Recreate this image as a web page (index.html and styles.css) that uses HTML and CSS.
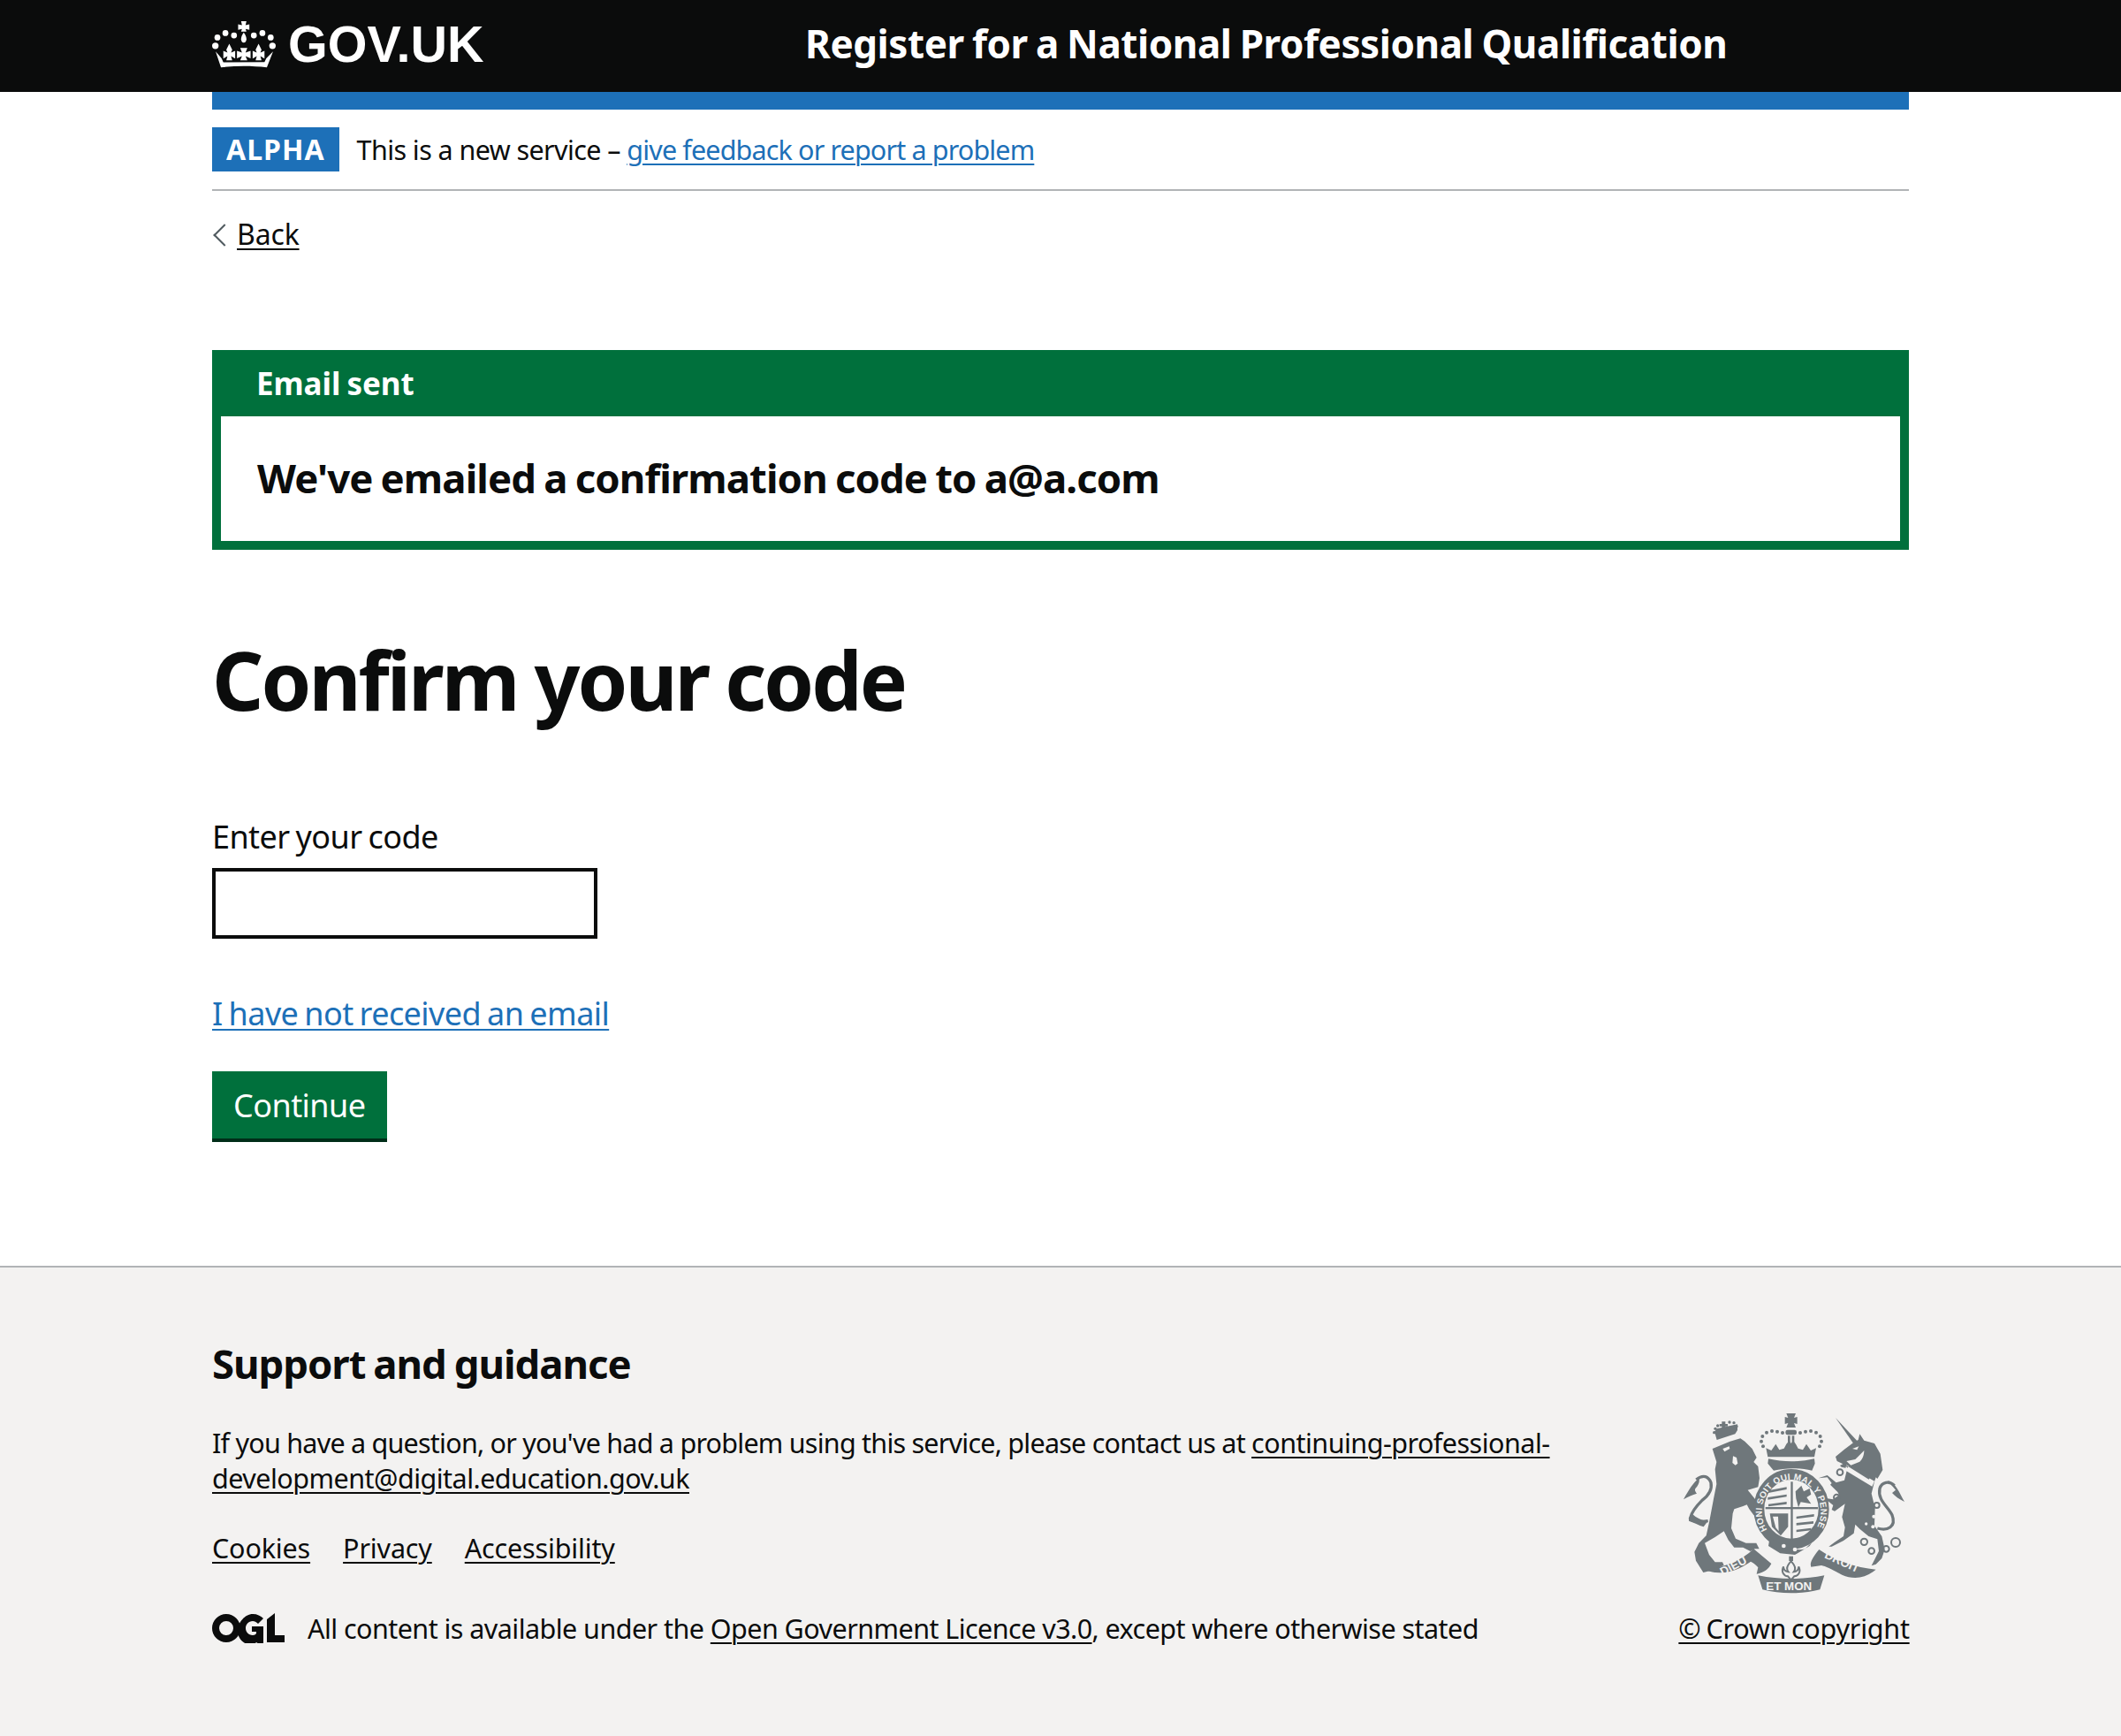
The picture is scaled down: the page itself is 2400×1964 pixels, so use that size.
FILE: index.html
```html
<!DOCTYPE html>
<html lang="en">

<head>
  <meta charset="UTF-8">
  <meta name="viewport" content="width=device-width, initial-scale=1.0">
  <title>Confirm your code</title>
  <link rel="stylesheet" href="styles.css">
</head>

<body>
  <header class="site-header">
    <div class="container header-inner">
      <a class="logo" href="#">
        <svg class="crown" viewBox="30 40 215 158" aria-hidden="true">
          <g fill="#fff">
            <circle cx="48" cy="95" r="10"/><circle cx="75" cy="80" r="10"/><circle cx="104" cy="88" r="10"/>
            <circle cx="171" cy="88" r="10"/><circle cx="200" cy="80" r="10"/><circle cx="228" cy="95" r="10"/>
            <circle cx="41" cy="123" r="11"/><circle cx="234" cy="123" r="11"/>
            <path d="M128 40h18l-3 13 13-3v19l-13-3 3 9h-18l3-9-13 3V50l13 3z"/>
            <path d="M137 78c7 10 9 17 9 22 0 7-4 12-9 12s-9-5-9-12c0-5 2-12 9-22z"/>
            <path d="M125 130h24l-6 16 17-6v25l-17-7 6 14h-24l6-14-17 7v-25l17 6z"/>
            <path d="M88 116l10 20-4 10 14-6v26l-14-8 4 14H78l4-14-14 8v-26l14 6-4-10z"/>
            <path d="M187 116l10 20-4 10 14-6v26l-14-8 4 14h-20l4-14-14 8v-26l14 6-4-10z"/>
            <path d="M60 196l-18-54 20 23 6 14 139-1 6-13 23-23-21 54c-50-6-105-6-155 0z"/>
          </g>
        </svg>
        <span>GOV.UK</span>
      </a>
      <a class="service-name" href="#">Register for a National Professional Qualification</a>
    </div>
  </header>

  <div class="container">
    <div class="blue-bar"></div>
    <div class="phase-banner">
      <strong class="tag">ALPHA</strong>
      <span>This is a new service – <a class="link" href="#">give feedback or report a problem</a></span>
    </div>
    <a class="back-link" href="#">Back</a>

    <main class="main">
      <div class="notification">
        <div class="notification-title">Email sent</div>
        <div class="notification-content">We've emailed a confirmation code to a@a.com</div>
      </div>

      <h1 class="heading">Confirm your code</h1>

      <form class="code-form">
        <label class="label" for="code">Enter your code</label>
        <input class="input" id="code" type="text">
        <p class="help"><a class="link" href="#">I have not received an email</a></p>
        <button class="button" type="button">Continue</button>
      </form>
    </main>
  </div>

  <footer class="footer">
    <div class="container footer-inner">
      <div class="footer-main">
        <h2 class="footer-heading">Support and guidance</h2>
        <p class="footer-text">If you have a question, or you've had a problem using this service, please contact us at <a href="#">continuing-professional-development@digital.education.gov.uk</a></p>
        <ul class="footer-links">
          <li><a href="#">Cookies</a></li>
          <li><a href="#">Privacy</a></li>
          <li><a href="#">Accessibility</a></li>
        </ul>
        <div class="licence">
          <svg class="ogl" viewBox="0 0 82 34" aria-hidden="true">
            <path fill="#0b0c0c" d="M16 1a16 16 0 1 0 0 32 16 16 0 0 0 0-32zm0 8a8 8 0 1 1 0 16 8 8 0 0 1 0-16z"/>
            <path fill="#0b0c0c" d="M46 1c5 0 9 2 12 5l-6 6c-2-2-4-3-6-3-5 0-8 4-8 8s3 8 8 8c2 0 3-1 4-2v-2h-5v-6h13v22l-5-2-3-2c-2 2-3 3-5 3-9 0-16-7-16-16S37 1 46 1z"/>
            <path fill="#0b0c0c" d="M62 7l9-7v25h11v8H62z"/>
          </svg>
          <span>All content is available under the <a href="#">Open Government Licence v3.0</a>, except where otherwise stated</span>
        </div>
      </div>
      <div class="footer-meta">
        <svg class="crest" viewBox="132 60 750 612" aria-hidden="true">
          <!-- lion -->
          <g transform="translate(90 30)" fill="#6f777b">
            <path d="M140 150l60-25 35-10 15 10 25 25 15 30-10 15 15 15 5 40-5 30-35 10 40 50 15 40-5 15-10-5-20-15-15-20-8-15-13 5-30 10-5 15-5 50 15 35 35 15h35l10 20h-15l-15 8-25-13h-30l-20-25-15-30-30 20-35 20 15 40 20 25h25l5 10-30 15-40 10-25-40-5-30 15-30 25-25 10-45 15-80 10-50-5-50 5-25z"/>
            <path d="M125 395c-30 5-65 0-60-10 5-25 25-45 40-60 20-15 35-35 30-60-8-20-25-30-50-10" fill="none" stroke="#6f777b" stroke-width="10"/>
            <path d="M95 250c-20 15-35 40-53 72 15-10 30-15 45-20-8-10-8-15 0-22 5-8 10-15 8-30z"/>
            <path d="M70 370c-8 10-10 22-10 25 15 5 35 15 50 20l15-20c-20 0-40-10-55-25z"/>
            <path d="M155 120l-8-28 8-10 70-15 0 20-8 13z"/>
            <g>
              <circle cx="150" cy="82" r="5"/><circle cx="146" cy="95" r="5"/><circle cx="158" cy="72" r="5"/>
              <circle cx="198" cy="60" r="5"/><circle cx="213" cy="62" r="5"/><circle cx="222" cy="74" r="5"/>
              <path d="M172 58h12v8h8v8h-8v8h-12v-8h-8v-8h8z"/>
            </g>
            <path d="M175 150l22-8 2 8-18 10zM210 175l12 5 4 20-8 6-10-8z" fill="#f3f2f1"/>
          </g>

          <!-- unicorn -->
          <g transform="translate(480 30)" fill="#6f777b">
            <path d="M168 45l75 80-14 8z"/>
            <path d="M230 128l15-8 5-20 15 22 35 10 20 35 8 55-18 30-5-5-5 15-10 40 12 50-2 60 25 35 10 45-10 30-20 20-15 5 10-20 15-30-5-40-30-10-30-25-15-15-5 30-35 25-40 20h-10l20-15 30-20 5-30-10-35 10-45-35 25-10-5 5-15-30-25 30 5 20-15-5-10-25-25 5-5-15-20-30 3 30-10 30 25 28-8 10-40-20-5-5-5 10-5-20-10-5-15 30-25z"/>
            <path d="M205 205l95 55-8 18-92-55z" fill="#f3f2f1"/>
            <path d="M208 215l6-8 5 6 5-3 5 8 6-6 5 8 6-6 5 8 6-6 5 9 6-4 5 9 6-3 7 9 2 6-7 12-80-50z"/>
            <path d="M225 150l22-8-6 12zM205 192l30-6 10-10 20-20c0 15-5 30-15 38l-30 12z" fill="#f3f2f1"/>
            <circle cx="298" cy="380" r="6" fill="#f3f2f1"/><circle cx="272" cy="405" r="5" fill="#f3f2f1"/><circle cx="295" cy="415" r="6" fill="#f3f2f1"/>
            <path d="M310 420c35 10 65-5 50-45-15-30-50-50-42-90 7-23 32-27 50-10" fill="none" stroke="#6f777b" stroke-width="10"/>
            <path d="M345 258c25 4 40 42 57 72-17-8-32-18-42-30l12-10z"/>
            <g fill="none" stroke="#6f777b" stroke-width="6">
              <circle cx="183" cy="230" r="10"/><circle cx="172" cy="315" r="10"/><circle cx="308" cy="342" r="9"/>
              <circle cx="265" cy="466" r="11"/><circle cx="290" cy="497" r="10"/><circle cx="340" cy="490" r="10"/><circle cx="372" cy="468" r="15"/>
            </g>
          </g>

          <!-- top crown -->
          <g fill="#6f777b">
            <path d="M418 208l-6-30 18 8 15-22 12 20 16-5 8-15 10-12 6 10 7-10 9 12 8 15 16 5 12-20 15 22 18-8-6 30z"/>
            <path d="M420 214c50 12 106 12 156 0l2 16-10 24c-40-10-90-10-130 0l-20-24z"/>
            <path d="M481 60h32l-6 15 11-3v24l-11-3 6 15h-32l6-15-11 3V72l11 3z"/>
            <rect x="478" y="116" width="38" height="17" rx="7"/>
            <rect x="486" y="136" width="8" height="34"/><rect x="500" y="136" width="8" height="34"/>
            <circle cx="402" cy="172" r="6"/><circle cx="396" cy="155" r="6"/><circle cx="400" cy="138" r="6"/><circle cx="414" cy="125" r="6"/><circle cx="432" cy="120" r="6"/><circle cx="450" cy="122" r="6"/><circle cx="468" cy="126" r="6"/>
            <circle cx="594" cy="172" r="6"/><circle cx="600" cy="155" r="6"/><circle cx="596" cy="138" r="6"/><circle cx="582" cy="125" r="6"/><circle cx="564" cy="120" r="6"/><circle cx="546" cy="122" r="6"/><circle cx="528" cy="126" r="6"/>
          </g>

          <!-- garter and shield -->
          <ellipse cx="498" cy="385" rx="110" ry="118" fill="none" stroke="#6f777b" stroke-width="36"/>
          <path d="M425 480c40 30 90 50 120 40l25-25-10 15-50 30-50-5-40-25z" fill="#6f777b"/>
          <circle cx="472" cy="510" r="7" fill="#f3f2f1"/><circle cx="510" cy="522" r="7" fill="#f3f2f1"/>
          <path id="garter-arc" d="M416 455A100 108 0 1 1 580 455" fill="none"/>
          <text class="crest-garter" fill="#f3f2f1"><textPath href="#garter-arc" textLength="445" lengthAdjust="spacing">HONI SOIT QUI MAL Y PENSE</textPath></text>
          <g fill="#6f777b">
            <rect x="496" y="292" width="7" height="200"/>
            <rect x="410" y="378" width="178" height="7"/>
            <path d="M420 322l62-12v8l-62 12zM418 345l64-10v8l-64 10zM420 368l62-8v8l-62 8z"/>
            <path d="M512 325l20-20 8 20 20-10 5 20-15 10 15 22-35-6-8 18-8-30z"/>
            <path d="M515 410l60-8v8l-60 8zM515 432l58-6v8l-58 6zM515 455l50-6v8l-50 6z"/>
            <path d="M425 400h62v45l-25 30-30-30zM435 410l10 38 10 12-2-50z" fill-rule="evenodd"/>
          </g>

          <!-- motto ribbon -->
          <g fill="#6f777b">
            <path d="M205 590c60-5 125-30 165-70l60 50c-10 20-25 30-50 35l5-22c-8-10-15-15-25-20-50 35-105 50-155 27z"/>
            <path d="M385 610c75 15 150 15 225 0l-15 48c-60 16-135 16-195 0z"/>
            <path d="M592 522c50 35 125 62 193 68-35 30-75 35-115 18-30-15-55-30-70-32l-35 5c-3-8-5-20 27-59z"/>
            <path d="M490 545h14v16h-14z"/>
          </g>
          <path d="M497 562c14 14 18 25 9 36 10-1 17-8 17-18 9 18-2 32-15 33l-11 12-11-12c-13-1-24-15-15-33 0 10 7 17 17 18-9-11-5-22 9-36z" fill="#f3f2f1" stroke="#6f777b" stroke-width="6"/>
          <g class="crest-motto" fill="#f3f2f1">
            <text x="265" y="612" transform="rotate(-28 265 612)">DIEU</text>
            <text x="412" y="660">ET MON</text>
            <text x="608" y="550" transform="rotate(24 608 550)">DROIT</text>
          </g>
        </svg>
        <a class="copyright" href="#">© Crown copyright</a>
      </div>
    </div>
  </footer>
</body>

</html>
```
FILE: styles.css
```css
* {
  box-sizing: border-box;
}

body {
  margin: 0;
  font-family: "Noto Sans", Arial, sans-serif;
  font-size: 36px;
  line-height: 50px;
  letter-spacing: -0.016em;
  word-spacing: -0.05em;
  color: #0b0c0c;
  background: #fff;
}

a {
  color: inherit;
  text-underline-offset: 4px;
  text-decoration-thickness: 2px;
}

.container {
  width: 1920px;
  margin: 0 auto;
}

.site-header {
  height: 104px;
  background: #0b0c0c;
}

.header-inner {
  display: flex;
  align-items: center;
  height: 100%;
}

.logo {
  display: flex;
  align-items: center;
  gap: 14px;
  width: 671px;
  margin-top: -3px;
  color: #fff;
  text-decoration: none;
  font-family: "Liberation Sans", Arial, sans-serif;
  font-size: 57.5px;
  font-weight: 700;
  letter-spacing: 0;
  line-height: 1;
}

.crown {
  width: 72px;
  height: 53px;
}

.service-name {
  margin-top: -6px;
  color: #fff;
  text-decoration: none;
  font-size: 44px;
  font-weight: 700;
  letter-spacing: -0.01em;
  white-space: nowrap;
}

.blue-bar {
  height: 20px;
  background: #1d70b8;
}

.phase-banner {
  display: flex;
  align-items: center;
  gap: 20px;
  padding: 20px 0;
  border-bottom: 2px solid #b1b4b6;
  font-size: 30.5px;
  letter-spacing: -0.019em;
  word-spacing: 0;
  line-height: 50px;
}

.phase-banner .link {
  letter-spacing: -0.028em;
}

.tag {
  display: block;
  padding: 0 16px;
  background: #1d70b8;
  color: #fff;
  font-size: 32px;
  letter-spacing: 1px;
}

.link {
  color: #1d70b8;
}

.back-link {
  display: inline-block;
  position: relative;
  margin-top: 29px;
  margin-left: 28px;
  font-size: 32px;
  letter-spacing: -0.005em;
  line-height: 40px;
}

.back-link::before {
  content: "";
  position: absolute;
  left: -23px;
  top: 12px;
  width: 16px;
  height: 16px;
  border-left: 2px solid #505a5f;
  border-bottom: 2px solid #505a5f;
  transform: rotate(45deg);
}

.main {
  padding-top: 107px;
}

.notification {
  border: 10px solid #00703c;
  background: #00703c;
}

.notification-title {
  padding: 0 40px;
  height: 65px;
  color: #fff;
  font-size: 35px;
  font-weight: 700;
  letter-spacing: -0.002em;
  line-height: 55px;
}

.notification-content {
  padding: 39px 41px 0;
  height: 141px;
  background: #fff;
  font-size: 45.5px;
  font-weight: 700;
  letter-spacing: -0.02em;
  line-height: 60px;
}

.heading {
  margin: 97px 0 103px;
  font-size: 91px;
  line-height: 100px;
  font-weight: 700;
  letter-spacing: -0.0325em;
}

.code-form {
  padding-bottom: 140px;
}

.label {
  display: block;
  margin-bottom: 10px;
}

.input {
  display: block;
  width: 436px;
  height: 80px;
  border: 4px solid #0b0c0c;
  background: #fff;
}

.help {
  margin: 60px 0 40px;
}

.button {
  display: block;
  height: 80px;
  padding: 0 24px;
  border: 0;
  border-bottom: 4px solid #002d18;
  background: #00703c;
  color: #fff;
  font-family: inherit;
  font-size: 36px;
  letter-spacing: -0.015em;
}

.footer {
  border-top: 2px solid #b1b4b6;
  background: #f3f2f1;
  height: 534px;
  font-size: 30.5px;
  line-height: 40px;
}

.footer-inner {
  display: flex;
  align-items: flex-end;
  justify-content: space-between;
  padding-top: 83px;
}

.footer-main {
  width: 1540px;
}

.footer-heading {
  margin: 0 0 45px;
  font-size: 45.5px;
  line-height: 50px;
  letter-spacing: -0.023em;
}

.footer-text {
  margin: 0 0 39px;
  letter-spacing: -0.025em;
  word-spacing: 0;
}

.footer-text a {
  letter-spacing: -0.017em;
}

.footer-links {
  display: flex;
  gap: 37px;
  margin: 0 0 51px;
  padding: 0;
  list-style: none;
  letter-spacing: -0.005em;
}

.licence {
  display: flex;
  align-items: center;
  gap: 26px;
  letter-spacing: -0.018em;
  word-spacing: 0;
}

.ogl {
  width: 82px;
  height: 34px;
}

.footer-meta {
  display: flex;
  flex-direction: column;
  align-items: center;
  width: 260px;
}

.crest {
  width: 250px;
  height: 204px;
  margin-bottom: 19px;
}

.crest-garter {
  font-family: "Liberation Sans", Arial, sans-serif;
  font-size: 30px;
  font-weight: 700;
  letter-spacing: 0;
  word-spacing: 0;
}

.crest-motto {
  font-family: "Liberation Sans", Arial, sans-serif;
  font-size: 40px;
  font-weight: 700;
  letter-spacing: 0;
  word-spacing: 0;
}

.copyright {
  letter-spacing: -0.008em;
  white-space: nowrap;
}
```
